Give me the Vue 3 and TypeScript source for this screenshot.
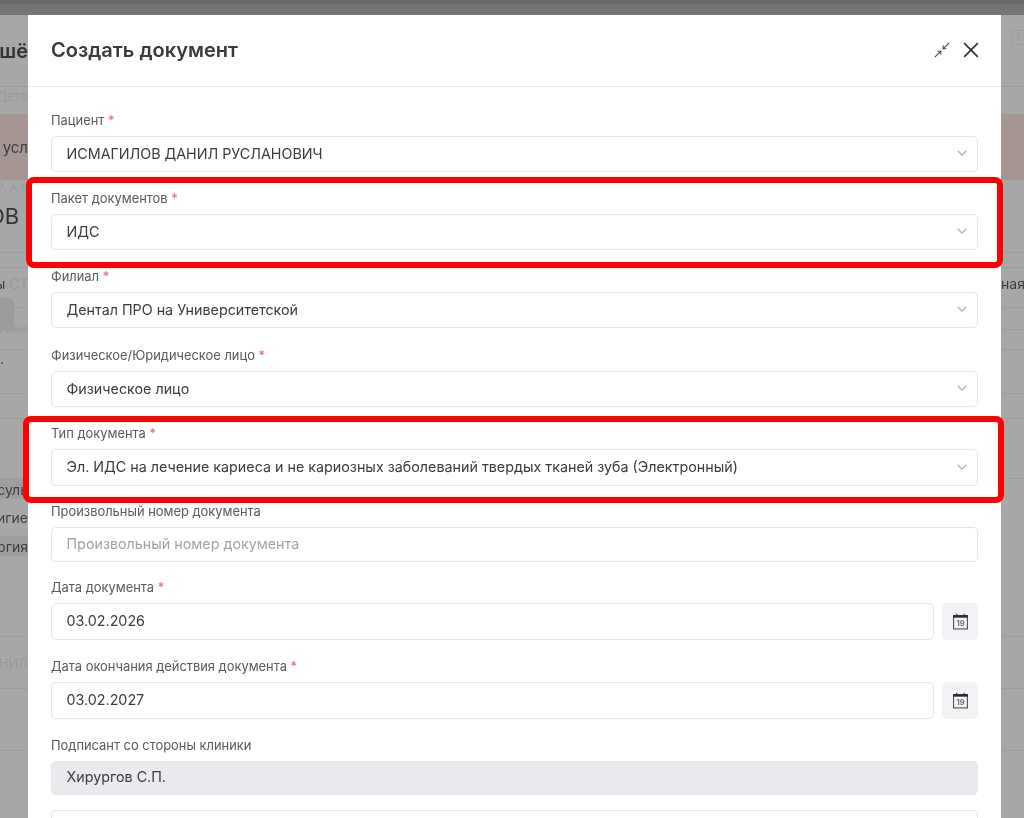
<script setup lang="ts">
interface BgRow { h: number; l?: string; tail?: string; r?: string; x?: number; pt?: number; cls?: string }
interface Field { label: string; req?: boolean; value: string; kind: 'select' | 'input' | 'date' | 'off' | 'empty'; h: number; gap: number; placeholder?: boolean }

const bgRows: BgRow[] = [
  { h: 15, cls: 'topbar' },
  { h: 72, l: 'шё', cls: 'title line' },
  { h: 18, l: 'Дето', cls: 'faint' },
  { h: 9 },
  { h: 66, l: 'усл', cls: 'pink' },
  { h: 14, l: 'Р. А.А', cls: 'faint small' },
  { h: 44, l: 'ОВ Д', x: -12, cls: 'big' },
  { h: 15, cls: 'line' },
  { h: 15, cls: 'line' },
  { h: 31, l: 'ы', tail: ' СТ', r: 'ная', x: -5, cls: 'mid' },
  { h: 9, cls: 'line' },
  { h: 22, l: 'гиен', pt: 18, cls: 'faint line' },
  { h: 20, cls: 'line' },
  { h: 17, l: '.', x: 0, cls: 'mid' },
  { h: 27, cls: 'line' },
  { h: 25, cls: 'line' },
  { h: 60, cls: 'line' },
  { h: 20, l: 'суль', cls: 'mid shade' },
  { h: 37, l: 'гигие', cls: 'mid' },
  { h: 20, l: 'ргия', cls: 'mid shade' },
  { h: 81, cls: 'line' },
  { h: 52, l: 'АНИЛ', cls: 'faint line' },
  { h: 62, cls: 'line' },
  { h: 68 },
]

const fields: Field[] = [
  { label: 'Пациент', req: true, value: 'ИСМАГИЛОВ ДАНИЛ РУСЛАНОВИЧ', kind: 'select', h: 36, gap: 20 },
  { label: 'Пакет документов', req: true, value: 'ИДС', kind: 'select', h: 36, gap: 20 },
  { label: 'Филиал', req: true, value: 'Дентал ПРО на Университетской', kind: 'select', h: 36, gap: 21 },
  { label: 'Физическое/Юридическое лицо', req: true, value: 'Физическое лицо', kind: 'select', h: 36, gap: 20 },
  { label: 'Тип документа', req: true, value: 'Эл. ИДС на лечение кариеса и не кариозных заболеваний твердых тканей зуба (Электронный)', kind: 'select', h: 37, gap: 19 },
  { label: 'Произвольный номер документа', value: 'Произвольный номер документа', kind: 'input', h: 35, gap: 19, placeholder: true },
  { label: 'Дата документа', req: true, value: '03.02.2026', kind: 'date', h: 37, gap: 20 },
  { label: 'Дата окончания действия документа', req: true, value: '03.02.2027', kind: 'date', h: 37, gap: 20 },
  { label: 'Подписант со стороны клиники', value: 'Хирургов С.П.', kind: 'off', h: 34, gap: 15 },
  { label: '', value: '', kind: 'empty', h: 40, gap: 0 },
]
</script>

<template>
  <div class="stage">
    <div class="page">
      <div
        v-for="(row, i) in bgRows"
        :key="i"
        class="bg-row"
        :class="row.cls"
        :style="{ height: row.h + 'px', paddingTop: (row.pt ?? 0) + 'px' }"
      >
        <span class="edge-l" :class="{ free: row.x !== undefined }">
          <span :style="{ marginLeft: (row.x ?? 0) + 'px' }">{{ row.l }}<em v-if="row.tail" class="tail">{{ row.tail }}</em></span>
        </span>
        <span class="edge-r">{{ row.r }}</span>
      </div>
    </div>
    <div class="chip-l"></div>
    <div class="chip-r">7</div>

    <section class="modal">
      <header class="head">
        <h1 class="heading">Создать документ</h1>
        <div class="tools">
          <svg width="16" height="16" viewBox="0 0 16 16" fill="none" stroke="#444" stroke-width="1.1">
            <path d="M.8 15.2 6.6 9.4M15.2.8 9.4 6.6" />
            <path d="M3.6 9.2H6.8V12.4M12.4 6.8H9.2V3.6" />
          </svg>
          <svg width="16" height="16" viewBox="0 0 16 16" fill="none" stroke="#333" stroke-width="1.7">
            <path d="M1.2 1.2 14.8 14.8M14.8 1.2 1.2 14.8" />
          </svg>
        </div>
      </header>

      <form class="body">
        <div v-for="f in fields" :key="f.label" class="field" :style="{ marginBottom: f.gap + 'px' }">
          <label v-if="f.label" class="label">{{ f.label }}<i v-if="f.req" class="star"> *</i></label>
          <div class="control">
            <div class="box" :class="{ off: f.kind === 'off', ph: f.placeholder, dated: f.kind === 'date' }" :style="{ height: f.h + 'px' }">
              <span class="val">{{ f.value }}</span>
              <svg v-if="f.kind === 'select'" class="chev" width="10" height="6" viewBox="0 0 10 6" fill="none" stroke="#b5b5b5" stroke-width="1.3">
                <path d="M.7.7 5 5 9.3.7" />
              </svg>
            </div>
            <button v-if="f.kind === 'date'" type="button" class="cal">
              <svg width="17" height="17" viewBox="0 0 16 16" fill="none">
                <rect x="1.5" y="2.5" width="13" height="12.5" fill="#f4f5f7" stroke="#4a4650" stroke-width="1" />
                <rect x="1" y="2" width="14" height="2.4" fill="#2f2b33" />
                <path d="M4.5 .8v2M11.5 .8v2" stroke="#2f2b33" stroke-width="1" />
                <text x="8" y="12.2" text-anchor="middle" class="cal-num">19</text>
              </svg>
            </button>
          </div>
        </div>
      </form>
    </section>

    <div class="mark mark-a"></div>
    <div class="mark mark-b"></div>
  </div>
</template>

<style scoped>
.stage {
  position: relative;
  width: 1024px;
  height: 818px;
  overflow: hidden;
  font-family: Inter, "Noto Sans", sans-serif;
  background: #a6a7a7;
  color: #333;
  filter: blur(0.3px);
}
.page { display: flex; flex-direction: column; }
.bg-row {
  display: flex;
  justify-content: space-between;
  align-items: center;
  font-size: 14px;
  color: #3d3f40;
  box-sizing: border-box;
  flex: none;
}
.edge-l, .edge-r {
  overflow: hidden;
  white-space: pre;
  display: flex;
}
.edge-l { width: 28px; justify-content: flex-end; }
.edge-l.free { justify-content: flex-start; }
.edge-r { width: 23px; }
.tail { font-style: normal; color: #999a9b; }
.topbar { background: linear-gradient(#6a6a6a 0 4px, #757575 4px); }
.line { border-bottom: 1px solid #9c9d9e; }
.title { font-size: 20px; font-weight: 600; color: #333; }
.faint { color: #999a9b; font-size: 13px; }
.small { font-size: 11px; }
.pink { background: #a79593; font-size: 15px; }
.big { font-size: 22px; color: #333; }
.mid { font-size: 14px; }
.shade .edge-l { background: #9d9e9e; height: 100%; align-items: center; }

.chip-l {
  position: absolute;
  left: -10px;
  top: 298px;
  width: 24px;
  height: 33px;
  border-radius: 6px;
  background: #9b9c9d;
}
.chip-r {
  position: absolute;
  left: 1011px;
  top: 30px;
  width: 20px;
  height: 15px;
  box-sizing: border-box;
  border: 1px solid #9c9d9e;
  border-radius: 3px;
  font-size: 10px;
  line-height: 13px;
  padding-left: 3px;
  color: #999a9b;
}

.modal {
  position: absolute;
  left: 28px;
  top: 15px;
  width: 973px;
  height: 803px;
  background: #fff;
  overflow: hidden;
}
.head {
  height: 72px;
  box-sizing: border-box;
  border-bottom: 1px solid #ebebeb;
  padding: 0 22px 1px 23px;
  display: flex;
  align-items: center;
  justify-content: space-between;
}
.heading { margin: 0; font-size: 20px; font-weight: 600; color: #3a3a3a; }
.tools { display: flex; gap: 13px; align-items: center; }
.body { padding: 27px 23px 0; display: flex; flex-direction: column; }
.label {
  display: block;
  height: 22px;
  line-height: 13px;
  font-size: 12.9px;
  color: #5a5a5a;
}
.star { color: #e2696c; font-style: normal; }
.control { display: flex; gap: 8px; }
.box {
  flex: 1;
  box-sizing: border-box;
  border: 1px solid #e4e5e6;
  border-radius: 5px;
  padding: 0 15px 0 14.5px;
  display: flex;
  align-items: center;
  justify-content: space-between;
  font-size: 14.3px;
  color: #3c3c3c;
}
.val { position: relative; top: -1px; }
.box.off { background: #e9ebee; }
.box.off .val { top: -2px; }
.box.ph { color: #a3a3a3; }
.chev { margin-right: -5px; position: relative; top: -1px; }
.cal {
  width: 36px;
  border: 0;
  padding: 0;
  border-radius: 5px;
  background: #f2f3f5;
  display: flex;
  align-items: center;
  justify-content: center;
}
.cal-num { font-size: 7px; font-weight: 700; fill: #6c6c70; font-family: Inter, sans-serif; }

.mark {
  position: absolute;
  box-sizing: border-box;
  border: 6px solid #fe0000;
  border-radius: 8px;
}
.mark-a { left: 26px; top: 177px; width: 977px; height: 91px; }
.mark-b { left: 23px; top: 416px; width: 981px; height: 87px; }
</style>
